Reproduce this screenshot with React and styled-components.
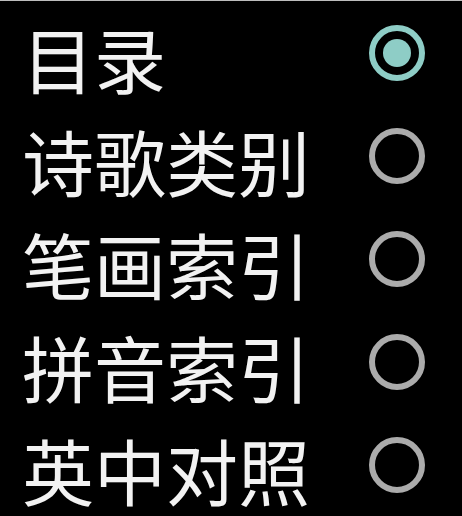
import React, { useState } from "react";
import styled, { createGlobalStyle } from "styled-components";

const Global = createGlobalStyle`
  html, body { margin: 0; padding: 0; background: #000; }
  body { font-family: "Noto Sans CJK SC", "Noto Sans", sans-serif; }
`;

const Screen = styled.div`
  width: 462px;
  height: 516px;
  background: #000;
  border-top: 1px solid #bdbdbd;
  box-sizing: border-box;
  display: flex;
  flex-direction: column;
  overflow: hidden;
`;

const Row = styled.label`
  height: 103px;
  flex: 0 0 103px;
  display: flex;
  align-items: center;
  justify-content: space-between;
  padding: 0 37px 0 22px;
  cursor: pointer;
`;

const Label = styled.span`
  font-family: "Noto Sans CJK SC", sans-serif;
  font-size: 72px;
  line-height: 1;
  color: #f2f2f2;
  position: relative;
  top: 4px;
`;

const Radio = styled.span`
  width: 56px;
  height: 56px;
  box-sizing: border-box;
  border-radius: 50%;
  border: 6px solid ${(p) => (p.$checked ? "#8ecdc6" : "#ababab")};
  display: flex;
  align-items: center;
  justify-content: center;
  &::after {
    content: "";
    width: 28px;
    height: 28px;
    border-radius: 50%;
    background: #8ecdc6;
    display: ${(p) => (p.$checked ? "block" : "none")};
  }
`;

const items = ["目录", "诗歌类别", "笔画索引", "拼音索引", "英中对照"];

export default function App() {
  const [sel, setSel] = useState(0);
  return (
    <>
      <Global />
      <Screen>
        {items.map((t, i) => (
          <Row key={t} onClick={() => setSel(i)}>
            <Label>{t}</Label>
            <Radio $checked={sel === i} />
          </Row>
        ))}
      </Screen>
    </>
  );
}
